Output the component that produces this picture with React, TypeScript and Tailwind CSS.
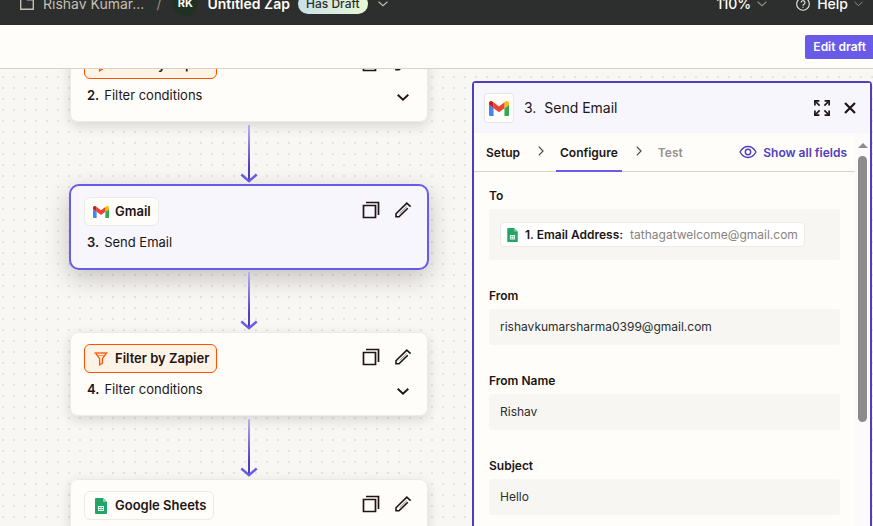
import type { ReactNode } from "react";

function GmailLogo({ className }: { className: string }) {
  return (
    <svg viewBox="52 42 88 66" className={className} aria-hidden="true">
      <path fill="#4285f4" d="M58 108h14V74L52 59v43c0 3.32 2.69 6 6 6" />
      <path fill="#34a853" d="M120 108h14c3.32 0 6-2.69 6-6V59l-20 15" />
      <path fill="#fbbc04" d="M120 48v26l20-15v-8c0-7.42-8.47-11.65-14.4-7.2" />
      <path fill="#ea4335" d="M72 74V48l24 18 24-18v26L96 92" />
      <path fill="#c5221f" d="M52 51v8l20 15V48l-5.6-4.2c-5.94-4.45-14.4-.22-14.4 7.2" />
    </svg>
  );
}

function SheetsLogo({ className }: { className: string }) {
  return (
    <svg viewBox="0 0 12 16" className={className} aria-hidden="true">
      <path fill="#23a566" d="M1 0h7l4 4v11a1 1 0 0 1-1 1H1a1 1 0 0 1-1-1V1a1 1 0 0 1 1-1z" />
      <path fill="#8ed1b1" d="M8 0l4 4H9a1 1 0 0 1-1-1z" />
      <path fill="#eef8f2" fillRule="evenodd" d="M3 8h6v5H3zM4 9v1h1.600V9zM6.400 9v1H8V9zM4 11v1h1.600v-1zM6.400 11v1H8v-1z" />
    </svg>
  );
}

function FilterLogo({ className }: { className: string }) {
  return (
    <svg viewBox="0 0 14 14" className={className} fill="none" stroke="#ff4f00" strokeWidth="1.3" aria-hidden="true">
      <path d="M.5 1h13" />
      <path d="M1.800 1.400l3.800 5.200v6.200l2.800-1.600V6.600l3.800-5.200" />
      <path d="M4 3.600h6" strokeWidth="0.6" />
    </svg>
  );
}

function Chevron({ className, weight = 1.9 }: { className: string; weight?: number }) {
  return (
    <svg viewBox="0 0 12 7" className={className} fill="none" stroke="currentColor" strokeWidth={weight} aria-hidden="true">
      <path d="M.7.8L6 5.600 11.300.8" />
    </svg>
  );
}

function StepChevron() {
  return (
    <svg viewBox="0 0 6 10" className="mb-[2px] h-[10px] w-[6px]" fill="none" stroke="#574e4c" strokeWidth="1.3" aria-hidden="true">
      <path d="M.8.6L5 5 .8 9.400" />
    </svg>
  );
}

function CopyIcon() {
  return (
    <svg viewBox="0 0 18 18" className="size-[18px]" fill="none" stroke="#201515" strokeWidth="1.7" aria-hidden="true">
      <path d="M1.500 4.500h12v12h-12z" />
      <path d="M4 1.500h12.500V14" />
    </svg>
  );
}

function PencilIcon() {
  return (
    <svg viewBox="0 0 18 18" className="size-[18px]" fill="none" stroke="#201515" strokeWidth="1.600" aria-hidden="true">
      <path d="M13.800 7.200L5 15.800H2v-3L12.800 2.200l3.800 3.400" />
      <path d="M5.600 12.600l7.400-7.200" strokeWidth="0.500" />
    </svg>
  );
}

function ExpandIcon() {
  return (
    <svg viewBox="0 0 16 16" className="size-4" fill="none" stroke="#201515" strokeWidth="1.7" aria-hidden="true">
      <path d="M.9 5.400V.9h4.500M10.600.9h4.500v4.500M15.100 10.600v4.500h-4.500M5.400 15.100H.9v-4.500" />
      <path d="M1 1l4.600 4.600M15 1l-4.600 4.600M15 15l-4.600-4.600M1 15l4.600-4.600" />
    </svg>
  );
}

function Arrow() {
  return (
    <svg viewBox="0 0 18 63" className="h-[63px] w-[18px] shrink-0 self-center" fill="none" aria-hidden="true">
      <defs>
        <linearGradient id="flow" x1="0" y1="3" x2="0" y2="59" gradientUnits="userSpaceOnUse">
          <stop offset="0" stopColor="#b9aff3" />
          <stop offset="0.75" stopColor="#503ebd" />
          <stop offset="1" stopColor="#503ebd" />
        </linearGradient>
      </defs>
      <path fill="url(#flow)" d="M8 3h2v56H8z" />
      <path stroke="#695be8" strokeWidth="2.4" d="M1.300 52.500L9 59.200l7.700-6.700" />
    </svg>
  );
}

type StepProps = {
  index: number;
  app: string;
  title?: string;
  logo: ReactNode;
  tone?: "plain" | "filter";
  selected?: boolean;
  collapsible?: boolean;
};

function Step({ index, app, title, logo, tone = "plain", selected = false, collapsible = false }: StepProps) {
  return (
    <article
      className={
        selected
          ? "flex h-[84px] shrink-0 justify-between rounded-[9px] bg-[#f7f6fd] pt-3 pr-4 pl-[14px] outline-2 -outline-offset-1 outline-[#695be8] shadow-[0_8px_24px_rgba(32,21,21,0.25)]"
          : "flex h-[84px] shrink-0 justify-between rounded-lg bg-[#fffdf9] pt-3 pr-4 pl-[14px] outline -outline-offset-1 outline-[#eceae3] shadow-[0_4px_12px_rgba(32,21,21,0.14)]"
      }
    >
      <div className="flex flex-col items-start gap-1">
        <span
          className={
            tone === "filter"
              ? "flex h-[29px] items-center gap-[5px] rounded-md border border-[#ff4f00] bg-[#fff3e6] px-[7px] text-[13px] font-semibold whitespace-nowrap"
              : "flex h-[29px] items-center gap-[5px] rounded-md border border-[#eceae3] bg-[#fffdf9] px-[7px] text-[13px] font-semibold whitespace-nowrap"
          }
        >
          {logo}
          <span className="pt-px">{app}</span>
        </span>
        {title && (
          <h3 className="flex gap-[5px] pl-[3px] text-[13px] leading-6">
            <b className="font-semibold">{index}.</b>
            {title}
          </h3>
        )}
      </div>
      <div className="flex flex-col items-end gap-[22px] pt-1">
        <div className="flex gap-[14px]">
          <button type="button" aria-label={`Duplicate step ${index}`}>
            <CopyIcon />
          </button>
          <button type="button" aria-label={`Rename step ${index}`}>
            <PencilIcon />
          </button>
        </div>
        {collapsible && (
          <button type="button" aria-label={`Show details of step ${index}`} className="mr-[3px]">
            <Chevron className="h-[7px] w-3" />
          </button>
        )}
      </div>
    </article>
  );
}

function Field({ id, label, value }: { id: string; label: string; value: string }) {
  return (
    <div className="flex flex-col gap-1">
      <label htmlFor={id} className="text-xs leading-[18px] font-semibold">
        {label}
      </label>
      <input
        id={id}
        defaultValue={value}
        className="h-9 w-full rounded-[3px] bg-[#f7f6f3] px-[11px] pb-[2px] text-xs text-[#2d2e2e]"
      />
    </div>
  );
}

function TopBar() {
  return (
    <header className="flex h-[25px] shrink-0 flex-col justify-end overflow-hidden bg-[#2d2e2e] text-sm text-[#fffdf9]">
      <div className="flex h-[43px] shrink-0 items-center justify-between pr-[10px] pl-5">
        <nav aria-label="Breadcrumb" className="flex items-center whitespace-nowrap">
          <svg viewBox="0 0 14 12" className="h-3 w-[14px]" fill="none" stroke="#c5c0b1" strokeWidth="1.4" aria-hidden="true">
            <path d="M.7.7h5l1.500 1h6.100v9.600H.7z" />
          </svg>
          <a href="#folder" className="ml-[9px] text-[#c5c0b1]">Rishav Kumar...</a>
          <span className="ml-3 text-[#939084]">/</span>
          <span className="ml-3 flex size-6 items-center justify-center rounded-full bg-[#1f3121] text-[11px] font-bold">RK</span>
          <button type="button" className="ml-[10px] flex items-center font-semibold">
            Untitled Zap
            <span className="ml-2 flex h-5 items-center rounded-full bg-linear-to-r from-[#c8e1e8] to-[#e8f8d4] px-2 text-xs font-medium text-[#2d2e2e]">
              Has Draft
            </span>
            <Chevron className="ml-[10px] h-[6px] w-[10px] text-[#c5c0b1]" weight={1.3} />
          </button>
        </nav>
        <div className="flex items-center gap-[29px] font-medium">
          <button type="button" className="flex items-center gap-[6px]">
            110%
            <Chevron className="h-[6px] w-[10px] text-[#939084]" weight={1.3} />
          </button>
          <button type="button" className="flex items-center gap-[6px]">
            <svg viewBox="0 0 16 16" className="mr-px size-[14px]" fill="none" stroke="#e8e6e0" strokeWidth="1.3" aria-hidden="true">
              <circle cx="8" cy="8" r="7.2" />
              <path d="M5.800 6.400a2.200 2.200 0 1 1 3.300 1.900c-.8.4-1.100.8-1.100 1.600M8 11v1.300" />
            </svg>
            Help
            <Chevron className="h-[6px] w-[9px] text-[#939084]" weight={1.3} />
          </button>
        </div>
      </div>
    </header>
  );
}

function StepPanel() {
  return (
    <aside className="mt-3 mr-px flex w-[400px] shrink-0 flex-col rounded-t border-2 border-b-0 border-[#503ebd] bg-[#fffdf9]">
      <header className="flex h-[50px] shrink-0 items-center bg-[#f7f6fd] pr-[14px] pl-[10px]">
        <span className="flex size-[30px] items-center justify-center rounded-[3px] border border-[#e8e7e4] bg-[#fffdf9]">
          <GmailLogo className="h-[15px] w-5" />
        </span>
        <h2 className="ml-[10px] flex-1 text-sm">3.&nbsp; Send Email</h2>
        <button type="button" aria-label="Expand panel">
          <ExpandIcon />
        </button>
        <button type="button" aria-label="Close panel" className="ml-[14px]">
          <svg viewBox="0 0 12 12" className="size-3" stroke="#201515" strokeWidth="2.2" aria-hidden="true">
            <path d="M1 1l10 10M11 1L1 11" />
          </svg>
        </button>
      </header>
      <div className="flex min-h-0 flex-1">
        <div className="min-w-0 flex-1">
          <div className="flex h-[39px] items-center border-b border-[#d7d3c9] pr-2 pl-3 text-xs font-semibold whitespace-nowrap">
            <button type="button" className="pt-[2px]">Setup</button>
            <span className="ml-[18px]">
              <StepChevron />
            </span>
            <button type="button" aria-current="step" className="-mb-px ml-3 h-[38px] border-b-2 border-[#695be8] px-1 pt-[2px]">
              Configure
            </button>
            <span className="ml-[14px]">
              <StepChevron />
            </span>
            <button type="button" className="ml-4 pt-[2px] text-[#95928e]">Test</button>
            <button type="button" className="ml-auto flex items-center gap-[6px] text-[#503ebd]">
              <svg viewBox="0 0 18 14" className="h-[14px] w-[18px]" fill="none" stroke="currentColor" strokeWidth="1.4" aria-hidden="true">
                <path d="M1 7c2-3.600 4.800-5.500 8-5.500S15 3.400 17 7c-2 3.600-4.800 5.500-8 5.500S3 10.600 1 7z" />
                <circle cx="9" cy="7" r="2.700" />
              </svg>
              <span className="pt-[2px]">Show all fields</span>
            </button>
          </div>
          <form className="flex flex-col gap-[27px] p-[15px]">
            <div role="group" aria-labelledby="to-label" className="flex flex-col gap-1">
              <span id="to-label" className="text-xs leading-[18px] font-semibold">To</span>
              <div className="flex h-[51px] items-center rounded-[3px] bg-[#f7f6f3] px-[11px]">
                <span className="flex h-[25px] items-center gap-[7px] rounded border border-[#eceae3] bg-white px-[6px] text-xs whitespace-nowrap">
                  <SheetsLogo className="h-[14px] w-[11px]" />
                  <b className="font-semibold">1. Email Address:</b>
                  <span className="text-[#88827e]">tathagatwelcome@gmail.com</span>
                </span>
              </div>
            </div>
            <Field id="from" label="From" value="rishavkumarsharma0399@gmail.com" />
            <Field id="from-name" label="From Name" value="Rishav" />
            <Field id="subject" label="Subject" value="Hello" />
          </form>
        </div>
        <div className="flex w-[15px] flex-col items-center bg-[#fbfbfd] pt-[10px]" aria-hidden="true">
          <svg viewBox="0 0 10 5" className="h-[5px] w-[10px] shrink-0" fill="#8b8b8b">
            <path d="M5 0l5 5H0z" />
          </svg>
          <div className="mt-2 h-[266px] w-[9px] shrink-0 rounded-full bg-[#8b8b8b]" />
        </div>
      </div>
    </aside>
  );
}

export default function App() {
  return (
    <div className="flex h-screen flex-col overflow-hidden bg-[#f8f7f4] font-['Inter',sans-serif] text-[#201515]">
      <TopBar />
      <div className="flex h-11 shrink-0 items-center justify-end border-b border-[#d7d3c9] bg-[#fffdf9]">
        <button type="button" className="h-6 rounded-l-xs bg-[#695be8] pr-[7px] pl-2 text-xs font-semibold text-white">
          Edit draft
        </button>
      </div>
      <main className="flex min-h-0 flex-1 justify-between overflow-hidden bg-[radial-gradient(circle_at_3px_8px,#e4e3df_1px,transparent_1px)] bg-size-[11px_11px]">
        <div className="-mt-[31px] ml-[70px] flex w-[358px] flex-col">
          <Step index={2} app="Filter by Zapier" title="Filter conditions" tone="filter" collapsible logo={<FilterLogo className="mx-[2px] size-[14px]" />} />
          <Arrow />
          <Step index={3} app="Gmail" title="Send Email" selected logo={<GmailLogo className="mx-px h-3 w-4" />} />
          <Arrow />
          <Step index={4} app="Filter by Zapier" title="Filter conditions" tone="filter" collapsible logo={<FilterLogo className="mx-[2px] size-[14px]" />} />
          <Arrow />
          <Step index={5} app="Google Sheets" logo={<SheetsLogo className="mx-[3px] h-4 w-3" />} />
        </div>
        <StepPanel />
      </main>
    </div>
  );
}
